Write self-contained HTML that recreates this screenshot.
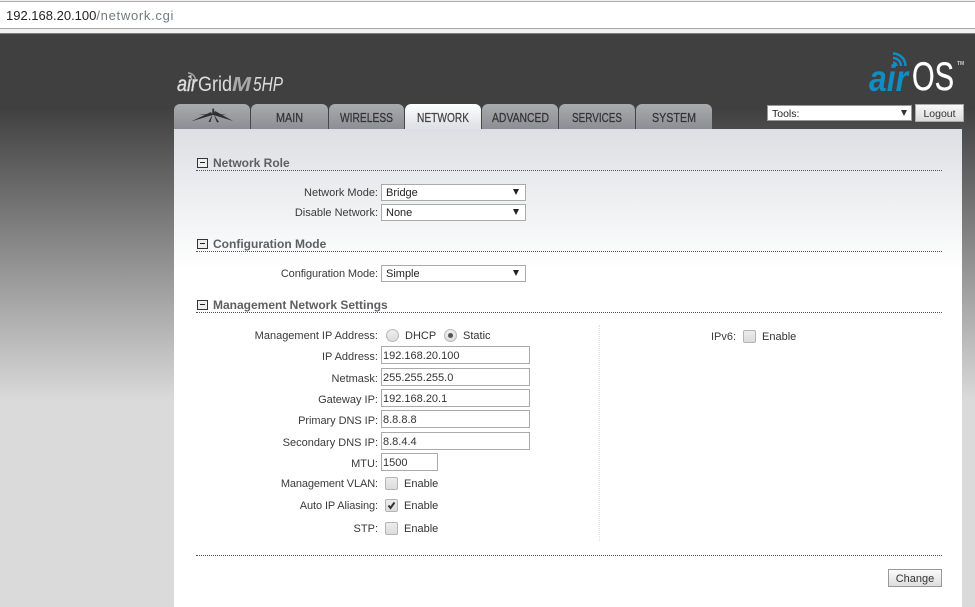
<!DOCTYPE html>
<html>
<head>
<meta charset="utf-8">
<style>
html,body{margin:0;padding:0;width:975px;height:607px;overflow:hidden;background:#dadada}
body{position:relative;font-family:"Liberation Sans",Arial,sans-serif;font-size:11px;color:#333}
.a{position:absolute}
.l{position:absolute;right:597px;margin-top:1px;text-align:right;white-space:nowrap;font-size:11px;line-height:13px;color:#3a3a3a}
.t{position:absolute;margin-top:1px;white-space:nowrap;font-size:11px;line-height:13px;color:#333}
.inp{position:absolute;left:381px;height:16px;border:1px solid #aaa;background:#fff;font-size:11px;line-height:19px;color:#333;padding-left:1px;box-sizing:content-box;width:146px}
.sel{position:absolute;left:381px;width:143px;height:15px;border:1px solid #aaa;background:#fff;font-size:11px;line-height:16px;color:#222}
.sel span{position:absolute;left:4px;top:0}
.sel i{position:absolute;right:6px;top:4px;width:0;height:0;border-left:3.5px solid transparent;border-right:3.5px solid transparent;border-top:6px solid #222}
.sec{position:absolute;left:196px;width:746px;height:15px;border-bottom:1px dotted #555}
.sec b{position:absolute;left:17px;top:1px;font-size:12px;line-height:14px;color:#5e5f61;font-weight:bold;white-space:nowrap}
.sec u{position:absolute;left:1px;top:3px;width:9px;height:8px;border:1px solid #333;background:#eee}
.sec u:after{content:"";position:absolute;left:2px;top:3px;width:5px;height:1px;background:#222}
.cb{position:absolute;left:385px;width:11px;height:11px;border:1px solid #b5b5b5;border-radius:2px;background:linear-gradient(#ececec,#dcdcdc)}
.r{position:absolute;width:11px;height:11px;border:1px solid #b8b8b8;border-radius:50%;background:linear-gradient(#eee,#ddd)}
.tab{position:absolute;top:104px;height:25px;border-radius:6px 6px 0 0;background:linear-gradient(#a9abad,#8b8e93)}
.tab.on{background:linear-gradient(#fff,#dfe2e6 90%)}
</style>
</head>
<body>
<!-- browser bar -->
<div class="a" style="left:0;top:0;width:975px;height:34px;background:#f1f1f1"></div>
<div class="a" style="left:0;top:1px;width:975px;height:26px;background:#fff;border-top:1px solid #aaa;border-bottom:1px solid #aaa"></div>
<div class="a" style="left:6px;top:7px;font-size:13px;line-height:17px;color:#222;white-space:nowrap">192.168.20.100<span style="color:#6f7b82;letter-spacing:.7px">/network.cgi</span></div>
<!-- page background -->
<div class="a" style="left:0;top:33px;width:975px;height:574px;background:linear-gradient(#404040 0,#404040 74px,#dadada 367px);border-top:1px solid #808080;box-sizing:border-box"></div>
<!-- content -->
<div class="a" style="left:174px;top:129px;width:788px;height:478px;background:linear-gradient(#dcdfe3 0,#fff 141px)"></div>

<!-- logos -->
<svg class="a" style="left:170px;top:70px" width="130" height="30" viewBox="0 0 130 30">
  <defs><linearGradient id="g" x1="0" y1="0" x2="0" y2="1"><stop offset="0" stop-color="#eee"/><stop offset="1" stop-color="#b0b0b0"/></linearGradient></defs>
  <g fill="none" stroke="#aaa" stroke-width="1.400"><path d="M18 3a7.500 7.500 0 0 1 7.500 7.500M18 6.500a4 4 0 0 1 4 4"/></g>
  <text x="7" y="21" font-family="Liberation Sans" font-size="21" font-style="italic" fill="#ddd" stroke="#ddd" stroke-width=".4" textLength="20" lengthAdjust="spacingAndGlyphs">air</text>
  <text x="28" y="21" font-family="Liberation Sans" font-size="21" fill="#ddd" textLength="34" lengthAdjust="spacingAndGlyphs">Grid</text>
  <text x="62" y="21" font-family="Liberation Sans" font-size="20" font-weight="bold" font-style="italic" fill="#a8a8a8" textLength="19" lengthAdjust="spacingAndGlyphs">M</text>
  <text x="83" y="21" font-family="Liberation Sans" font-size="20" font-style="italic" fill="#ddd" textLength="30" lengthAdjust="spacingAndGlyphs">5HP</text>
</svg>
<svg class="a" style="left:860px;top:48px" width="110" height="50" viewBox="0 0 110 50">
  <g fill="none" stroke="#0d8fc5" stroke-width="2.500"><path d="M33 5.500a12.500 12.500 0 0 1 12.500 12.500M33 10a8 8 0 0 1 8 8M33 14.500a3.500 3.500 0 0 1 3.500 3.500"/></g>
  <text x="9" y="43" font-family="Liberation Sans" font-size="37" font-weight="bold" font-style="italic" fill="#0d8fc5" textLength="39" lengthAdjust="spacingAndGlyphs">air</text>
  <text x="52" y="42" font-family="Liberation Sans" font-size="40" fill="#fff" stroke="#fff" stroke-width=".3" textLength="42" lengthAdjust="spacingAndGlyphs">OS</text>
  <text x="97" y="17" font-family="Liberation Sans" font-size="5" font-weight="bold" fill="#ccc">TM</text>
</svg>

<!-- tabs -->
<div class="tab" style="left:174px;width:76px"></div>
<div class="tab" style="left:251px;width:77px"></div>
<div class="tab" style="left:329px;width:75px"></div>
<div class="tab on" style="left:405px;width:76px"></div>
<div class="tab" style="left:482px;width:76px"></div>
<div class="tab" style="left:559px;width:76px"></div>
<div class="tab" style="left:636px;width:76px"></div>
<svg class="a" style="left:174px;top:104px" width="540" height="25" viewBox="0 0 540 25">
  <g fill="#2f2f2f">
    <path d="M17 17.500 L37 8 L38.500 11 Z"/>
    <path d="M59 17 L41 7 L39.500 11 Z"/>
    <path d="M24 11 L37 9.500 L38 11 Z" opacity=".8"/>
    <path d="M53 11 L41 9 L40 11 Z" opacity=".8"/>
    <path d="M38.500 4.500 L40 4.500 L40.500 11 L38 11 Z"/>
    <path d="M38.500 10 L34.500 18 L36.500 18 Z"/>
    <path d="M39.500 10 L43 18.500 L45 18 Z"/>
  </g>
  <g font-family="Liberation Sans" font-size="13" fill="#333" stroke="#333" stroke-width=".25" text-anchor="start">
    <text x="102" y="18" textLength="27" lengthAdjust="spacingAndGlyphs">MAIN</text>
    <text x="166" y="18" textLength="53" lengthAdjust="spacingAndGlyphs">WIRELESS</text>
    <text x="243" y="18" textLength="52" lengthAdjust="spacingAndGlyphs" fill="#444" stroke="#444">NETWORK</text>
    <text x="318" y="18" textLength="57" lengthAdjust="spacingAndGlyphs">ADVANCED</text>
    <text x="398" y="18" textLength="50" lengthAdjust="spacingAndGlyphs">SERVICES</text>
    <text x="478" y="18" textLength="44" lengthAdjust="spacingAndGlyphs">SYSTEM</text>
  </g>
</svg>

<!-- tools -->
<div class="a" style="left:767px;top:105px;width:143px;height:14px;border:1px solid #999;background:#fff;font-size:10.500px;line-height:16px;color:#222"><span style="position:absolute;left:4px;top:0">Tools:</span><i style="position:absolute;right:4px;top:4px;width:0;height:0;border-left:3.500px solid transparent;border-right:3.500px solid transparent;border-top:6px solid #333"></i></div>
<div class="a" style="left:915px;top:104px;width:47px;height:16px;border:1px solid #aaa;background:linear-gradient(#f8f8f8,#dcdcdc);font-size:10.500px;line-height:18px;text-align:center;color:#333">Logout</div>

<!-- sections -->
<div class="sec" style="top:155px"><u></u><b>Network Role</b></div>
<div class="l" style="top:186px">Network Mode:</div>
<div class="sel" style="top:184px"><span>Bridge</span><i></i></div>
<div class="l" style="top:206px">Disable Network:</div>
<div class="sel" style="top:204px"><span>None</span><i></i></div>

<div class="sec" style="top:236px"><u></u><b>Configuration Mode</b></div>
<div class="l" style="top:267px;letter-spacing:-.1px">Configuration Mode:</div>
<div class="sel" style="top:265px"><span>Simple</span><i></i></div>

<div class="sec" style="top:297px"><u></u><b>Management Network Settings</b></div>

<div class="a" style="left:599px;top:325px;height:216px;border-left:1px dotted #ddd"></div>

<div class="l" style="top:329px">Management IP Address:</div>
<div class="r" style="left:386px;top:329px"></div>
<div class="t" style="left:405px;top:329px">DHCP</div>
<div class="r" style="left:444px;top:329px"></div>
<div class="a" style="left:448px;top:333px;width:5px;height:5px;border-radius:50%;background:#555"></div>
<div class="t" style="left:463px;top:329px">Static</div>

<div class="l" style="top:350px">IP Address:</div>
<div class="inp" style="top:346px">192.168.20.100</div>
<div class="l" style="top:372px">Netmask:</div>
<div class="inp" style="top:368px">255.255.255.0</div>
<div class="l" style="top:393px">Gateway IP:</div>
<div class="inp" style="top:389px">192.168.20.1</div>
<div class="l" style="top:414px;letter-spacing:-.05px">Primary DNS IP:</div>
<div class="inp" style="top:410px">8.8.8.8</div>
<div class="l" style="top:436px">Secondary DNS IP:</div>
<div class="inp" style="top:432px">8.8.4.4</div>
<div class="l" style="top:457px">MTU:</div>
<div class="inp" style="top:453px;width:54px">1500</div>

<div class="l" style="top:477px;letter-spacing:-.12px">Management VLAN:</div>
<div class="cb" style="top:477px"></div>
<div class="t" style="left:404px;top:477px">Enable</div>
<div class="l" style="top:499px;letter-spacing:-.1px">Auto IP Aliasing:</div>
<div class="cb" style="top:499px"></div>
<svg class="a" style="left:385px;top:499px" width="13" height="13" viewBox="0 0 13 13"><path d="M3.500 6.500 L5.500 9 L9.500 3.500" fill="none" stroke="#333" stroke-width="2"/></svg>
<div class="t" style="left:404px;top:499px">Enable</div>
<div class="l" style="top:522px">STP:</div>
<div class="cb" style="top:522px"></div>
<div class="t" style="left:404px;top:522px">Enable</div>

<div class="t" style="left:711px;top:330px;color:#3a3a3a">IPv6:</div>
<div class="cb" style="left:743px;top:330px"></div>
<div class="t" style="left:762px;top:330px">Enable</div>

<div class="a" style="left:196px;top:555px;width:746px;border-top:1px dotted #555"></div>
<div class="a" style="left:888px;top:569px;width:52px;height:16px;border:1px solid #999;background:linear-gradient(#fafafa,#dedede);font-size:11px;line-height:18px;text-align:center;color:#333">Change</div>
</body>
</html>
